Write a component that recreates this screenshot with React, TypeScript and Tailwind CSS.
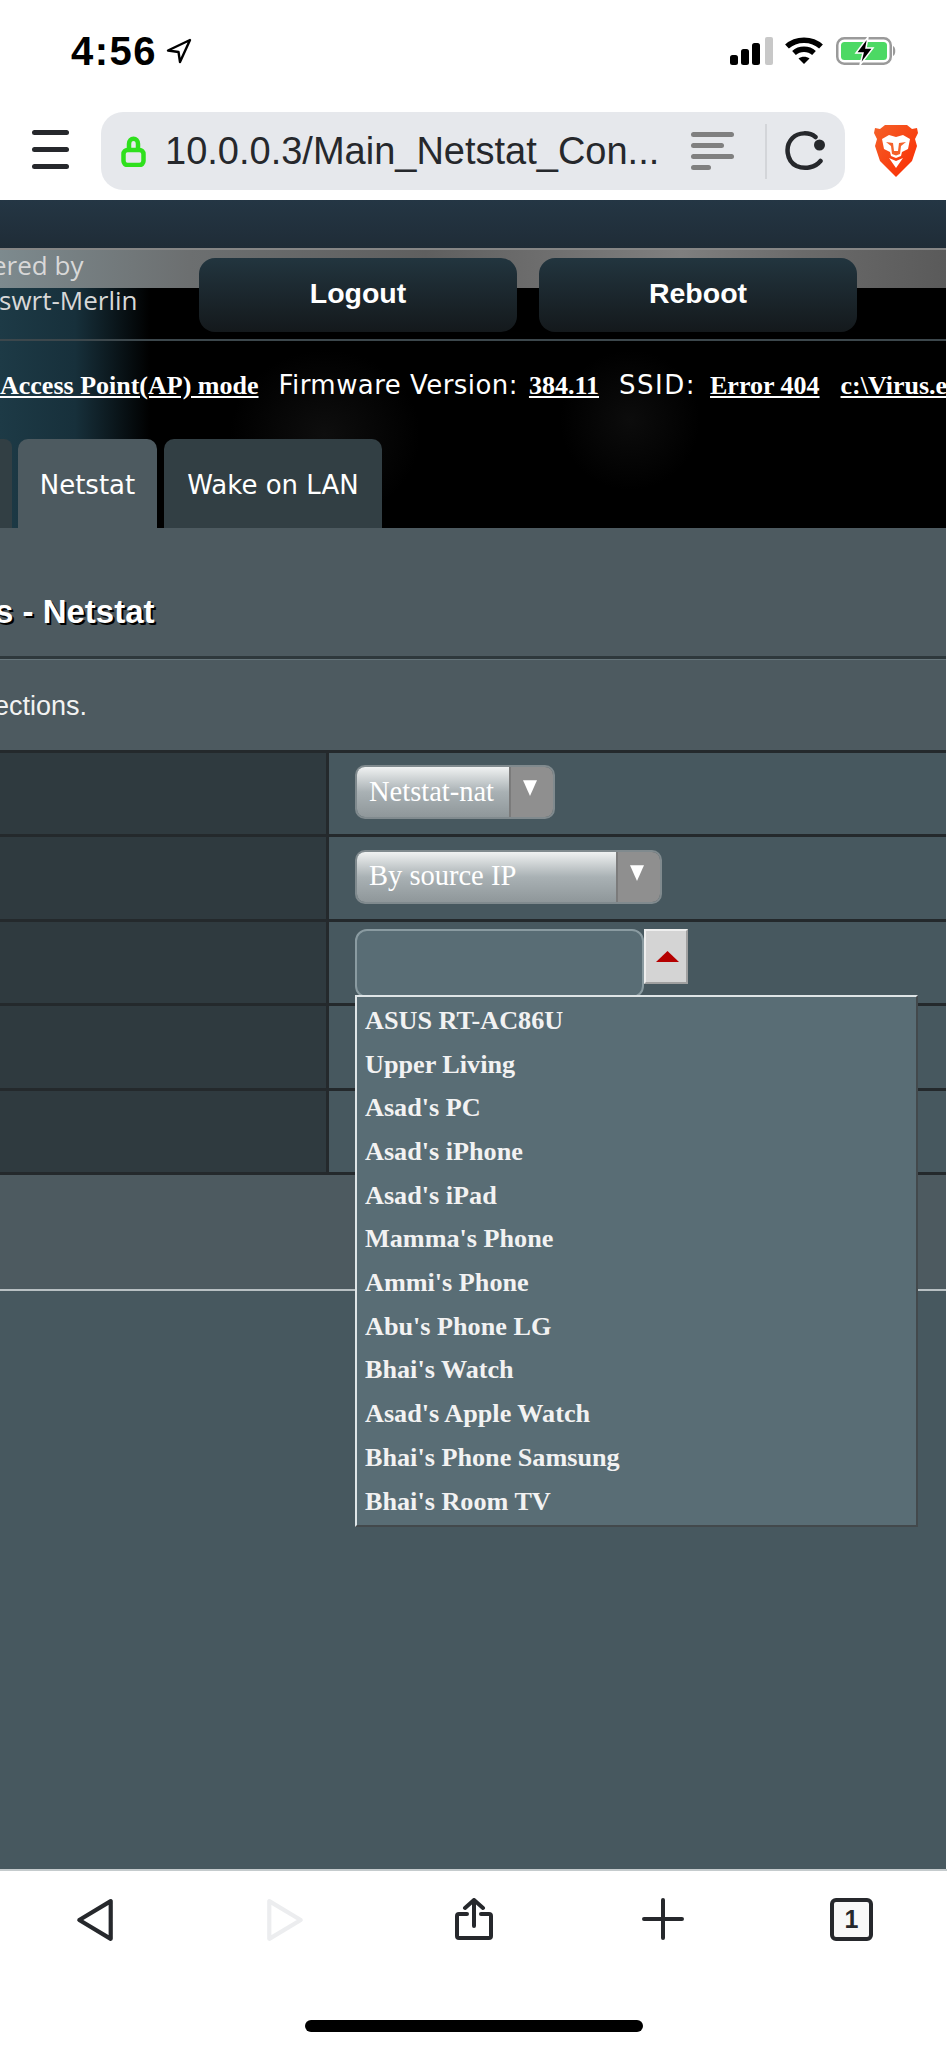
const devices = [
  'ASUS RT-AC86U',
  'Upper Living',
  "Asad's PC",
  "Asad's iPhone",
  "Asad's iPad",
  "Mamma's Phone",
  "Ammi's Phone",
  "Abu's Phone LG",
  "Bhai's Watch",
  "Asad's Apple Watch",
  "Bhai's Phone Samsung",
  "Bhai's Room TV",
];

function StatusBar() {
  return (
    <div className="h-[112px] shrink-0 flex items-start justify-between pt-[37px] pl-[71px] pr-[50px]">
      <div className="flex items-center gap-[9px] h-[28px]">
        <span className="font-['Liberation_Sans'] font-bold text-[40px] tracking-[1.5px] leading-none text-black">4:56</span>
        <svg width="26" height="26" viewBox="0 0 26 26" fill="none" stroke="#000" strokeWidth="2.4" strokeLinejoin="round">
          <path d="M24 2 L2 12.5 L12.5 14 L14 24 Z" />
        </svg>
      </div>
      <div className="flex items-center h-[28px]">
        <svg width="43" height="28" viewBox="0 0 43 28">
          <rect x="0" y="18" width="8" height="10" rx="2.5" fill="#000" />
          <rect x="11" y="12" width="8" height="16" rx="2.5" fill="#000" />
          <rect x="22" y="6" width="8" height="22" rx="2.5" fill="#000" />
          <rect x="35" y="0" width="8" height="28" rx="2" fill="#c8c8c8" />
        </svg>
        <svg className="ml-[11px]" width="40" height="28" viewBox="0 0 40 28" fill="none" stroke="#000" strokeWidth="5.5">
          <path d="M3 9.5 C12 1 28 1 37 9.5" />
          <path d="M10 16 C15.5 11 24.5 11 30 16" />
          <path d="M20 27 L14.5 21.5 C17.5 19 22.5 19 25.5 21.5 Z" fill="#000" stroke="none" />
        </svg>
        <svg className="ml-[12px]" width="61" height="28" viewBox="0 0 61 28">
          <rect x="1.25" y="1.25" width="53.5" height="25.5" rx="7" fill="#fff" stroke="#9a9a9a" strokeWidth="2.5" />
          <rect x="5" y="5" width="46" height="18" rx="3.5" fill="#4cd964" />
          <path d="M57 9 C60 10 60 18 57 19 Z" fill="#9a9a9a" />
          <path d="M32 0 L20 16 H27 L24 28 L37 11 H30 Z" fill="#000" stroke="#fff" strokeWidth="1.5" />
        </svg>
      </div>
    </div>
  );
}

function BraveLogo() {
  return (
    <svg width="44" height="52" viewBox="0 0 44 52">
      <defs>
        <linearGradient id="brave" x1="0" y1="0" x2="1" y2="1">
          <stop offset="0" stopColor="#f4622a" />
          <stop offset="1" stopColor="#fb2a00" />
        </linearGradient>
      </defs>
      <path d="M11 0 H33 L38 4 L43 3 L44 8 L41 14 L43 21 L38 36 L22 52 L6 36 L1 21 L3 14 L0 8 L1 3 L6 4 Z" fill="url(#brave)" />
      <path d="M8 14 L15 10 L22 12 L29 10 L36 14 L34 24 L28 27 L27 31 L22 33 L17 31 L16 27 L10 24 Z" fill="#fff" />
      <path d="M12 17 L19 18 L20 26 L24 26 L25 18 L32 17 L27 21 L26 29 L22 30.5 L18 29 L17 21 Z" fill="#f4622a" />
      <path d="M22 36 L29 33 L22 43 L15 33 Z" fill="#fff" />
    </svg>
  );
}

function UrlBar() {
  return (
    <div className="h-[88px] shrink-0 flex items-start pl-[32px]">
      <div className="w-[37px] h-[39px] mt-[18px] flex flex-col justify-between">
        <div className="h-[5px] rounded-full bg-[#26282c]" />
        <div className="h-[5px] rounded-full bg-[#26282c]" />
        <div className="h-[5px] rounded-full bg-[#26282c]" />
      </div>
      <div className="ml-[32px] w-[744px] h-[78px] rounded-[22px] bg-[#e6e8ec] flex items-center">
        <svg className="ml-[20px] shrink-0" width="25" height="31" viewBox="0 0 25 31" fill="none" stroke="#2fe01d" strokeWidth="4.5">
          <path d="M8 14 V8 C8 1 17 1 17 8 V14" />
          <rect x="2.5" y="14" width="20" height="15" rx="4" />
        </svg>
        <span className="ml-[19px] w-[530px] font-['Liberation_Sans'] text-[38px] leading-none text-[#26282c] whitespace-nowrap">
          10.0.0.3/Main_Netstat_Con...
        </span>
        <div className="-ml-[4px] w-[43px] flex flex-col gap-[6px]">
          <div className="h-[5px] w-[43px] rounded-full bg-[#808080]" />
          <div className="h-[5px] w-[33px] rounded-full bg-[#808080]" />
          <div className="h-[5px] w-[43px] rounded-full bg-[#808080]" />
          <div className="h-[5px] w-[20px] rounded-full bg-[#808080]" />
        </div>
        <div className="ml-[31px] w-[2px] h-[55px] bg-[#d3d5d9]" />
        <svg className="ml-[17px]" width="43" height="40" viewBox="0 0 42 40" fill="none" stroke="#26282c" strokeWidth="4.5" strokeLinecap="round">
          <path d="M31 6 C25 1 14 1 8 7 C0 15 2 30 12 35 C21 39 31 36 36 30" />
          <circle cx="35" cy="14" r="5.5" fill="#26282c" stroke="none" />
        </svg>
      </div>
      <div className="ml-[29px] mt-[13px]">
        <BraveLogo />
      </div>
    </div>
  );
}

function Header() {
  return (
    <div className="relative h-[328px] shrink-0 bg-black overflow-hidden">
      {/* background art of the router page */}
      <div className="absolute left-0 top-[48px] h-[280px] w-[150px] bg-gradient-to-r from-[#1d3a46] via-[#17303b] to-transparent" />
      <div className="absolute left-[230px] top-[150px] h-[170px] w-[190px] rounded-full bg-[radial-gradient(closest-side,#0e0e0e,transparent)]" />
      <div className="absolute left-[560px] top-[150px] h-[140px] w-[140px] rounded-full bg-[radial-gradient(closest-side,#0c0c0c,transparent)]" />
      <div className="absolute left-0 right-0 top-[48px] h-[40px] bg-[linear-gradient(to_right,#7d8a8e_0%,#6c6f70_20%,#5f5f5f_45%,#7f7f7f_72%,#6a6a6a_85%,#5a5a5a_100%)] border-t-2 border-[#868686]" />
      <div className="relative h-[48px] bg-gradient-to-b from-[#243644] to-[#1f2c37]" />
      <div className="relative h-[93px] border-b-2 border-[#3c474c] flex items-start pt-[10px]">
        <div className="w-[199px] -mt-[10px] font-['Open_Sans'] text-[26px] leading-[35px] text-[#d8d8d8] whitespace-nowrap">
          <div className="-ml-[8px]">ered by</div>
          <div className="-ml-px">swrt-Merlin</div>
        </div>
        <button className="w-[318px] h-[74px] pb-[4px] rounded-[16px] bg-gradient-to-b from-[#22353f] to-[#14191c] font-['Liberation_Sans'] font-bold text-[28.5px] text-white">
          Logout
        </button>
        <button className="ml-[22px] w-[318px] h-[74px] pb-[4px] rounded-[16px] bg-gradient-to-b from-[#22353f] to-[#14191c] font-['Liberation_Sans'] font-bold text-[28.5px] text-white">
          Reboot
        </button>
      </div>
      <div className="relative h-[98px] flex items-center pb-[10px] whitespace-nowrap text-white text-[26px]">
        <a className="font-['Liberation_Serif'] font-bold underline">Access Point(AP) mode</a>
        <span className="ml-[20px] font-['DejaVu_Sans'] tracking-[0.45px]">Firmware Version:</span>
        <a className="ml-[11px] font-['Liberation_Serif'] font-bold underline">384.11</a>
        <span className="ml-[20px] font-['DejaVu_Sans'] tracking-[1.5px]">SSID:</span>
        <a className="ml-[14px] font-['Liberation_Serif'] font-bold underline">Error 404</a>
        <a className="ml-[21px] font-['Liberation_Serif'] font-bold underline">c:\Virus.e</a>
      </div>
      <div className="relative h-[89px] flex items-start font-['DejaVu_Sans'] text-[26px] text-white">
        <div className="w-[12px] h-full rounded-tr-[8px] bg-[#323f44]" />
        <div className="ml-[6px] w-[139px] h-full pt-[4px] rounded-t-[10px] bg-[#4d5a60] flex items-center justify-center">Netstat</div>
        <div className="ml-[7px] w-[218px] h-full pt-[4px] rounded-t-[10px] bg-[#323f44] flex items-center justify-center">Wake on LAN</div>
      </div>
    </div>
  );
}

function SelectBox({ label, width, textWidth }: { label: string; width: string; textWidth: string }) {
  return (
    <div className={`${width} h-[54px] rounded-[10px] border-2 border-[#808a8e] overflow-hidden flex`}>
      <div className={`${textWidth} h-full pl-[12px] flex items-center bg-gradient-to-b from-[#f0f2f2] via-[#a9b1b4] to-[#8f979a] font-['Liberation_Serif'] text-[28.5px] text-white whitespace-nowrap`}>
        {label}
      </div>
      <div className="flex-1 h-full pb-[8px] pr-[4px] flex items-center justify-center bg-[#8f8f8f] border-l-2 border-[#7b7b7b]">
        <svg width="14" height="16" viewBox="0 0 16 18">
          <path d="M0 0 H16 L8 18 Z" fill="#fff" />
        </svg>
      </div>
    </div>
  );
}

function Row({ children }: { children?: React.ReactNode }) {
  return (
    <div className="h-[84.4px] border-t-[3px] border-[#24292c] flex">
      <div className="w-[326px] bg-[#2f3a3f] border-r-[3px] border-[#24292c] box-content" />
      <div className="relative flex-1 bg-[#47585f] pl-[26px] pb-[3px] flex items-center">{children}</div>
    </div>
  );
}

function DeviceInput() {
  return (
    <div className="relative w-full h-full pt-[7px] flex items-start">
      <div className="w-[289px] h-[69px] rounded-[12px] border-2 border-[#8a9ba1] bg-[#596d75]" />
      <div className="w-[44px] h-[55px] pl-[3px] flex items-center justify-center bg-[#d4d4d4] border-2 border-t-[#eeeeee] border-l-[#eeeeee] border-r-[#a0a0a0] border-b-[#a0a0a0]">
        <svg width="23" height="11" viewBox="0 0 23 11">
          <path d="M11.5 0 L23 11 H0 Z" fill="#b50000" />
        </svg>
      </div>
      <div className="absolute left-0 top-[73px] z-10 w-[563px] h-[532px] bg-[#596d75] border-t-2 border-l-2 border-[#dfe5e7] border-r-2 border-b-2 border-r-[#43494c] border-b-[#43494c] pl-[8px] pt-[2px] font-['Liberation_Serif'] font-bold text-[26.2px] text-[#f2f2f2]">
        {devices.map((name) => (
          <div key={name} className="h-[43.7px] flex items-center whitespace-nowrap">
            {name}
          </div>
        ))}
      </div>
    </div>
  );
}

function Content() {
  return (
    <div className="flex-1 bg-[#47585f] flex flex-col">
      <div className="bg-[#4d5a60] border-b-[2px] border-[#b8c0c3]">
        <div className="h-[131px] border-b-[3px] border-[#2e383c] pt-[66px]">
          <h1 className="-ml-[5px] font-['Liberation_Sans'] font-bold text-[33px] leading-[36px] text-white whitespace-nowrap [text-shadow:2px_2px_0_#000]">
            s - Netstat
          </h1>
        </div>
        <div className="h-[91px] border-t border-[#66757b] pt-[28px]">
          <p className="-ml-[6px] font-['Liberation_Sans'] text-[27px] leading-[36px] text-[#f2f2f2]">ections.</p>
        </div>
        <Row>
          <SelectBox label="Netstat-nat" width="w-[200px]" textWidth="w-[152px]" />
        </Row>
        <Row>
          <SelectBox label="By source IP" width="w-[307px]" textWidth="w-[259px]" />
        </Row>
        <Row>
          <DeviceInput />
        </Row>
        <Row />
        <Row />
        <div className="h-[117px] border-t-[3px] border-[#24292c]" />
      </div>
    </div>
  );
}

function BottomBar() {
  const stroke = '#26282c';
  return (
    <div className="h-[179px] shrink-0 border-t-[2px] border-[#c5cbcd] bg-white flex flex-col items-center">
      <div className="w-full flex items-start pt-[27px] pl-[76px] h-[149px]">
        <svg width="38" height="44" viewBox="0 0 36 42" fill="none" stroke={stroke} strokeWidth="4" strokeLinejoin="round">
          <path d="M33 3 V39 L3 21 Z" />
        </svg>
        <svg className="ml-[152px]" width="38" height="44" viewBox="0 0 36 42" fill="none" stroke="#ecedef" strokeWidth="4" strokeLinejoin="round">
          <path d="M3 3 V39 L33 21 Z" />
        </svg>
        <svg className="ml-[151px]" width="38" height="42" viewBox="0 0 38 42" fill="none" stroke={stroke} strokeWidth="4" strokeLinecap="round" strokeLinejoin="round">
          <path d="M12 16 H4 Q2 16 2 18 V38 Q2 40 4 40 H34 Q36 40 36 38 V18 Q36 16 34 16 H26" />
          <path d="M19 28 V2 M10 10 L19 2 L28 10" />
        </svg>
        <svg className="ml-[149px]" width="42" height="42" viewBox="0 0 42 42" fill="none" stroke={stroke} strokeWidth="4" strokeLinecap="round">
          <path d="M21 2 V40 M2 21 H40" />
        </svg>
        <div className="ml-[146px] w-[43px] h-[43px] rounded-[6px] border-[4px] border-[#26282c] bg-[#f8f8f8] flex items-center justify-center font-['Liberation_Sans'] font-bold text-[25px] leading-none text-[#26282c]">
          1
        </div>
      </div>
      <div className="w-[338px] h-[12px] rounded-full bg-black" />
    </div>
  );
}

export default function App() {
  return (
    <div className="w-[947px] h-[2048px] bg-white flex flex-col overflow-hidden">
      <StatusBar />
      <UrlBar />
      <div className="flex-1 flex flex-col pr-px overflow-hidden">
        <Header />
        <Content />
      </div>
      <BottomBar />
    </div>
  );
}
